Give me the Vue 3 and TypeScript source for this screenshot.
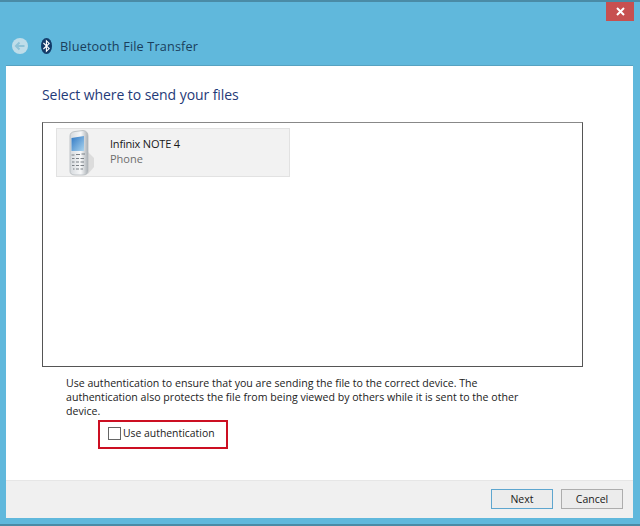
<template>
  <div class="window">
    <div class="title-strip">
      <button class="close-btn" aria-label="Close">
        <svg width="9" height="9" viewBox="0 0 9 9"><path d="M1 1 L8 8 M8 1 L1 8" stroke="#fff" stroke-width="2" /></svg>
      </button>
    </div>

    <div class="wizard-head">
      <span class="back-btn">
        <svg width="16" height="16" viewBox="0 0 16 16">
          <circle cx="8" cy="8" r="8" fill="#bfdde9" />
          <path d="M3.5 8 H12.5 M7.5 4.5 L4 8 L7.5 11.5" fill="none" stroke="#8fc3d8" stroke-width="2" />
        </svg>
      </span>
      <svg class="bt-icon" width="11" height="16" viewBox="0 0 11 16">
        <ellipse cx="5.5" cy="8" rx="5.5" ry="8" fill="#123a68" />
        <path d="M2.4 5 L8.2 10.6 L5.4 13.2 V2.8 L8.2 5.4 L2.4 11" fill="none" stroke="#fff" stroke-width="1.1" />
      </svg>
      <span class="wizard-title">Bluetooth File Transfer</span>
    </div>

    <div class="panel">
      <div class="content">
        <h1 class="heading">Select where to send your files</h1>

        <div class="device-list">
          <div class="device" v-for="d in devices" :key="d.name">
            <svg class="phone" width="27" height="46" viewBox="0 0 27 46">
              <defs>
                <linearGradient id="screen" x1="0" y1="0" x2="1" y2="1">
                  <stop offset="0" stop-color="#2f78c4" />
                  <stop offset="1" stop-color="#a9d3ee" />
                </linearGradient>
                <linearGradient id="body" x1="0" y1="0" x2="1" y2="0">
                  <stop offset="0" stop-color="#d5d9dd" />
                  <stop offset="0.6" stop-color="#f7f8f9" />
                  <stop offset="1" stop-color="#aab0b5" />
                </linearGradient>
              </defs>
              <path d="M21 44 L27 37 V28 L21 22 Z" fill="#dcdcdc" />
              <path d="M3 6 Q3 2 8 1.5 L16 0.5 Q21 1 21 6 V41 Q21 45 16 45 H8 Q3 45 3 41 Z" fill="url(#body)" stroke="#b4b9bd" stroke-width="0.8" />
              <path d="M4.5 8 L17 6 V21 L4.5 21 Z" fill="url(#screen)" />
              <g fill="none" stroke="#7b8187" stroke-width="1">
                <path d="M4.5 25 H7.5 M9 24.5 H13 M14.5 24 H18" />
                <path d="M5 28.5 H7.5 M9 28.5 H12 M13.5 28.5 H17" />
                <path d="M5 32 H7.5 M9 32 H12 M13.5 32 H17" />
                <path d="M5 35.5 H7.5 M9 35.5 H12 M13.5 35.5 H17" />
                <path d="M6 39 H7.5 M9 39 H12 M13.5 39 H16" />
              </g>
            </svg>
            <div class="device-text">
              <div class="device-name">{{ d.name }}</div>
              <div class="device-type">{{ d.type }}</div>
            </div>
          </div>
        </div>

        <p class="hint">
          Use authentication to ensure that you are sending the file to the correct device. The
          authentication also protects the file from being viewed by others while it is sent to the other
          device.
        </p>

        <label class="auth-box">
          <span class="checkbox"></span>
          <span>Use authentication</span>
        </label>
      </div>

      <div class="footer">
        <button class="btn btn-default">Next</button>
        <button class="btn">Cancel</button>
      </div>
    </div>
  </div>
</template>

<script setup lang="ts">
const devices = [{ name: 'Infinix NOTE 4', type: 'Phone' }]
</script>

<style>
html, body { margin: 0; background: #60b8dc; }
</style>

<style scoped>
.window {
  width: 640px; height: 526px; box-sizing: border-box;
  background: #60b8dc;
  border-top: 2px solid #4a8ba6; border-bottom: 2px solid #4a8ba6;
  display: flex; flex-direction: column;
  font-family: "Open Sans", "Noto Sans", sans-serif;
  overflow: hidden;
}

.title-strip { height: 19px; display: flex; justify-content: flex-end; padding-right: 6px; flex: none; }
.close-btn {
  width: 28px; height: 19px; padding: 0; border: none;
  background: #c75050; display: flex; align-items: center; justify-content: center;
}

.wizard-head { height: 45px; display: flex; align-items: center; padding-left: 12px; flex: none; box-sizing: border-box; padding-top: 5px; }
.back-btn { display: flex; margin-right: 13px; }
.bt-icon { margin-right: 8px; }
.wizard-title { font-size: 12.7px; color: #1a3f5c; letter-spacing: 0.15px; }

.panel {
  margin: 0 7px 6px 6px; flex: 1; min-height: 0;
  background: #fff; display: flex; flex-direction: column;
  box-shadow: 0 -1px 0 #56a2c1;
}
.content { flex: 1; padding: 0 50px 0 36px; position: relative; }

.heading { margin: 19px 0 0; height: 37px; font-size: 14px; font-weight: 400; letter-spacing: -0.07px; color: #1f3a78; }

.device-list {
  height: 245px; box-sizing: border-box;
  border: 1px solid #555; border-top-color: #888;
  padding: 5px 13px;
}
.device {
  width: 234px; height: 49px; box-sizing: border-box;
  background: #f2f2f2; border: 1px solid #e2e2e2;
  display: flex; align-items: center; padding-left: 10px;
}
.device-text { margin-left: 16px; font-size: 11px; line-height: 15px; padding-bottom: 3px; }
.device-name { color: #1a1a1a; letter-spacing: -0.2px; }
.device-type { color: #6d6d6d; }

.hint { margin: 9px 0 0 24px; font-size: 10.6px; line-height: 14px; color: #222; width: 465px; }

.auth-box {
  display: flex; align-items: center;
  width: 130px; height: 29px; box-sizing: border-box;
  margin: 2px 0 0 56px;
  border: 2px solid #cc0f22;
  padding: 0 0 3px 8px;
  font-size: 10.4px; color: #222;
}
.checkbox { width: 11px; height: 11px; border: 1px solid #666; background: #fff; margin-right: 2px; flex: none; }

.footer {
  height: 38px; flex: none; background: #f0f0f0;
  border-top: 1px solid #e6e6e6;
  display: flex; justify-content: flex-end; align-items: center; gap: 8px;
  padding: 0 10px 2px 0; box-sizing: border-box;
}
.btn {
  width: 62px; height: 20px; padding: 0;
  background: #ececec; border: 1px solid #adadad;
  font-family: inherit; font-size: 10.5px; color: #1a1a1a;
}
.btn-default { border-color: #5ea6cf; }
</style>
